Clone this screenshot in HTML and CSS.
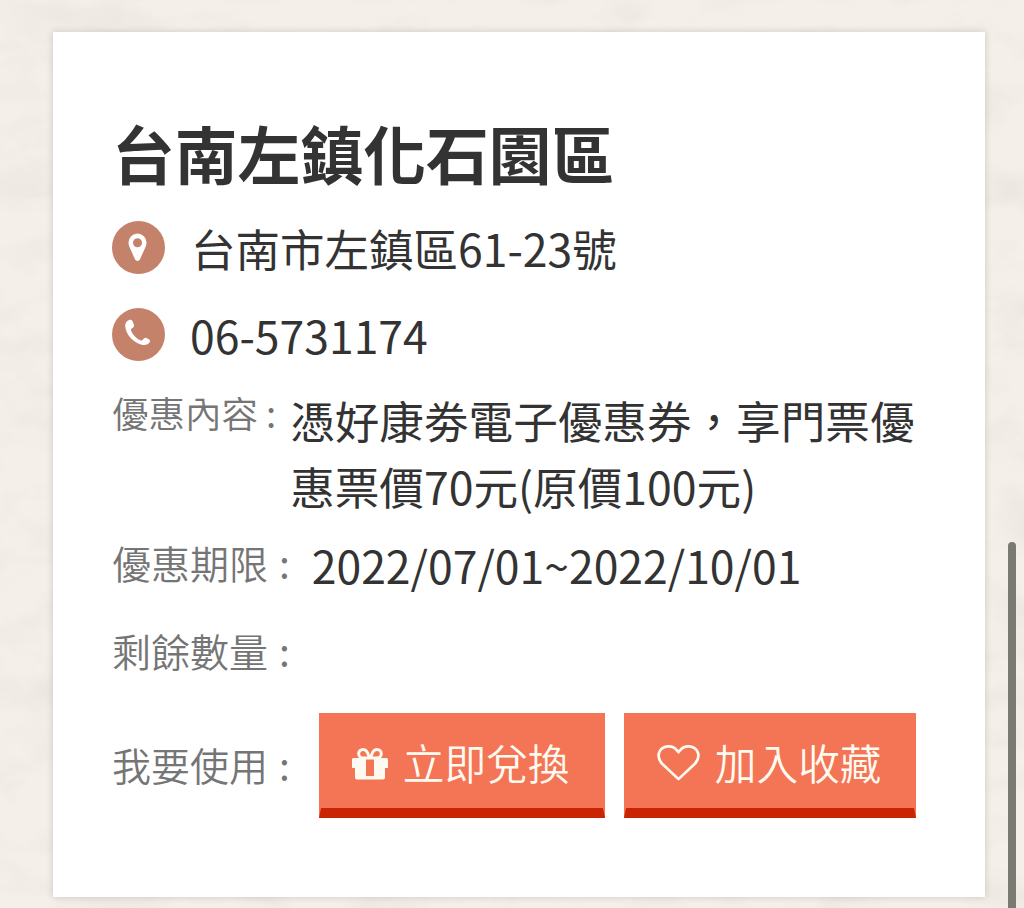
FILE: index.html
```
<!DOCTYPE html>
<html lang="zh-Hant">
<head>
<title>台南左鎮化石園區</title>
<meta charset="UTF-8">
<link rel="stylesheet" href="styles.css">
</head>
<body>
  <svg class="paper" width="1024" height="908" aria-hidden="true">
    <filter id="grain" x="0" y="0" width="100%" height="100%">
      <feTurbulence type="fractalNoise" baseFrequency="0.014 0.024" numOctaves="5" seed="8"/>
      <feColorMatrix values="0 0 0 0 0.6  0 0 0 0 0.56  0 0 0 0 0.52  0.4 0.2 0 0 -0.27"/>
    </filter>
    <rect width="1024" height="908" filter="url(#grain)"/>
  </svg>

  <div class="card">
    <h1 class="title">台南左鎮化石園區</h1>

    <div class="contact">
      <span class="badge">
        <svg width="53" height="53" viewBox="0 0 53 53">
          <path fill="#fff" fill-rule="evenodd" d="M25.500 12.500a9 9 0 0 0-9 9c0 2.300.6 3.600 1.200 5l5.400 12a2.700 2.700 0 0 0 4.800 0l5.400-12c.6-1.400 1.200-2.700 1.200-5a9 9 0 0 0-9-9zm0 4.700a4.500 4.500 0 1 1 0 9 4.500 4.500 0 0 1 0-9z"/>
        </svg>
      </span>
      <span class="text">台南市左鎮區61-23號</span>
    </div>
    <div class="contact">
      <span class="badge">
        <svg width="53" height="53" viewBox="0 0 53 53">
          <path fill="#fff" d="M17 12c1.900-.5 3 0 3.700 1.500l1.300 3.400c.4 1.600-.5 2.400-2.300 3.600-.9.700-.9 1.300-.5 2.400 1.800 4.100 5.200 7.600 9 9.400 1.200.5 1.900.4 2.600-.5 1.200-1.700 2.200-2.400 3.700-1.700l2.700 1.500c.9.600 1 1.400.6 2.500-1.100 2.400-4 3.300-7.200 2.900C22 35.600 13.700 26.500 13.200 18.300c-.1-3 1.300-5.500 3.800-6.300z"/>
        </svg>
      </span>
      <span class="text">06-5731174</span>
    </div>

    <div class="row row-content">
      <span class="label label-sm">優惠內容<i class="colon">:</i></span>
      <span class="text">憑好康劵電子優惠券，享門票優惠票價70元(原價100元)</span>
    </div>
    <div class="row row-date">
      <span class="label">優惠期限<i class="colon">:</i></span>
      <span class="text">2022/07/01~2022/10/01</span>
    </div>
    <div class="row row-count">
      <span class="label">剩餘數量<i class="colon">:</i></span>
    </div>
    <div class="row row-use">
      <span class="label">我要使用<i class="colon">:</i></span>
      <div class="buttons">
        <button class="btn btn-gift">
          <svg width="36" height="33" viewBox="0 0 36 33">
            <path fill="none" stroke="#fffaf0" stroke-width="3" d="M17.500 11H11a4.300 4.300 0 0 1 0-8.600c2.500 0 3.700 1.700 4.500 3.200zM18.500 11H25a4.300 4.300 0 0 0 0-8.600c-2.500 0-3.700 1.700-4.500 3.200z"/>
            <path fill="#fffaf0" fill-rule="evenodd" d="M1.500 11h33q1.500 0 1.500 1.500V21h-3v9.500q0 2-2 2H5q-2 0-2-2V21H0v-8.500Q0 11 1.500 11zM14 11.500V29h8V11.500z"/>
          </svg>
          <span>立即兌換</span>
        </button>
        <button class="btn btn-fav">
          <svg width="43" height="38" viewBox="0 0 44 38">
            <path fill="none" stroke="#fffaf0" stroke-width="2.800" stroke-linejoin="round" d="M22 35.500L5 19.500C1.500 15.500 1 11 2.500 7.500 5.500 1 15.500 0 20 5.500l2 2.500 2-2.500C28.500 0 38.500 1 41.500 7.500c1.500 3.500 1 8-2.500 12z"/>
          </svg>
          <span>加入收藏</span>
        </button>
      </div>
    </div>
  </div>

  <div class="scrollbar"></div>
</body>
</html>
```
FILE: styles.css
```
* {
    box-sizing: border-box;
}
body {
    margin: 0;
    height: 908px;
    padding: 32px 0 0 53px;
    overflow: hidden;
    position: relative;
    font-family: "Noto Sans CJK TC", sans-serif;
    color: #333333;
    background-color: #f4f0e9;
}
.paper {
    position: absolute;
    left: 0;
    top: 0;
    z-index: -1;
}
.card {
    width: 932px;
    height: 865px;
    padding: 78px 59px 0;
    background-color: #ffffff;
    box-shadow: 0 0 7px rgba(0, 0, 0, 0.16);
}
.title {
    margin: 0;
    height: 94px;
    line-height: 83px;
    font-size: 62.8px;
    font-weight: bold;
    white-space: nowrap;
}
.contact {
    display: flex;
    align-items: center;
    gap: 26px;
    height: 87px;
}
.contact + .contact {
    gap: 25px;
}
.badge {
    width: 53px;
    height: 53px;
    border-radius: 50%;
    background-color: #c4826a;
}
.badge svg {
    display: block;
}
.text {
    font-size: 44.5px;
    line-height: 66px;
}
.row {
    display: flex;
}
.label {
    flex: none;
    font-size: 39px;
    font-weight: 350;
    line-height: 58px;
    color: #757575;
    white-space: nowrap;
}
.label-sm {
    font-size: 36.5px;
}
.colon {
    font-style: normal;
    font-weight: 400;
    margin-left: 0.28em;
}
.label-sm .colon {
    margin-left: 0.22em;
}
.row-content {
    height: 151px;
    gap: 14px;
}
.row-content .label {
    margin-top: 6px;
}
.row-content .text {
    margin-top: 9px;
    flex: 1;
    margin-right: -6px;
    font-size: 44.6px;
}
.row-date {
    height: 88px;
    gap: 22px;
}
.row-date .label {
    margin-top: 4px;
}
.row-date .text {
    margin-top: 3px;
}
.row-count {
    height: 84px;
    padding-top: 4px;
}
.row-use {
    gap: 29px;
}
.row-use .label {
    margin-top: 34px;
}
.buttons {
    display: flex;
    gap: 19px;
    margin-top: 12px;
}
.btn {
    display: flex;
    align-items: center;
    height: 105px;
    padding: 0 0 0 31px;
    border: 2px solid #f47456;
    border-bottom: 10px solid #c92404;
    font-family: inherit;
    font-size: 41.7px;
    font-weight: 350;
    white-space: nowrap;
    color: #fffaf0;
    background-color: #f47456;
}
.btn svg {
    margin-top: 3px;
}
.btn-gift {
    width: 286px;
    gap: 15px;
}
.btn-fav {
    width: 292px;
    gap: 15px;
}
.scrollbar {
    position: absolute;
    right: 8px;
    top: 542px;
    width: 8px;
    height: 380px;
    border-radius: 4px;
    background-color: #7a7974;
}
```
